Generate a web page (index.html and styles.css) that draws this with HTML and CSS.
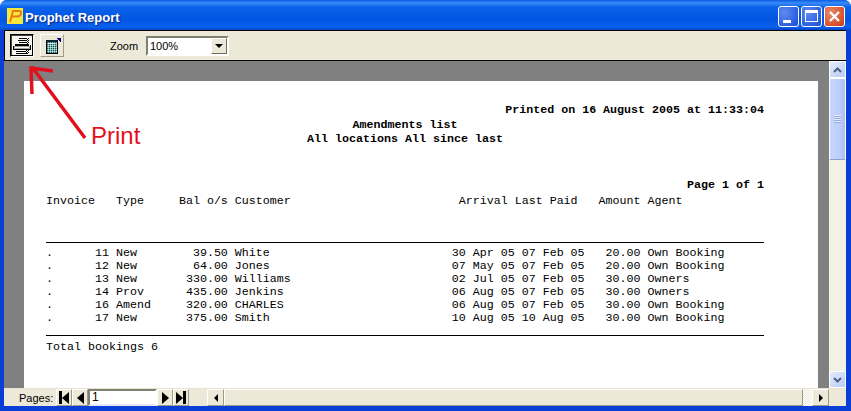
FILE: index.html
```html
<!DOCTYPE html>
<html lang="en">
<head>
<meta charset="utf-8">
<title>Prophet Report</title>
<link rel="stylesheet" href="styles.css">
</head>
<body>
<div class="window">
  <header class="titlebar">
    <svg class="app-icon" viewBox="0 0 16 16" width="16" height="16"><rect width="16" height="16" fill="#f8e838"/><path d="M3 14 L6 3 H12.5 Q14.5 3 14 5.5 Q13.5 8.500 10 8.500 H5" fill="none" stroke="#e8761c" stroke-width="1.800"/></svg>
    <span class="title">Prophet Report</span>
    <div class="caption-buttons">
      <button class="cap cap-blue"><span class="min-glyph"></span></button>
      <button class="cap cap-blue"><span class="max-glyph"></span></button>
      <button class="cap cap-red"><svg viewBox="0 0 13 13" width="13" height="13"><path d="M2 2 L11 11 M11 2 L2 11" stroke="#fff" stroke-width="2.400"/></svg></button>
    </div>
  </header>
  <div class="toolbar">
    <button class="tool tool-pressed">
      <svg viewBox="0 0 18 17" width="18" height="17" shape-rendering="crispEdges"><defs><pattern id="dith" width="2" height="2" patternUnits="userSpaceOnUse"><rect width="2" height="2" fill="#fff"/><rect width="1" height="1" fill="#000"/><rect x="1" y="1" width="1" height="1" fill="#000"/></pattern></defs><path d="M5 0h10v7H5z" fill="#fff"/><path d="M6 1h8M5 3h10M6 5h9" stroke="#000"/><path d="M14 1h2v6h-2z" fill="url(#dith)"/><path d="M2 7h14v2H2z" fill="#000"/><path d="M1 9h16v3H1z" fill="#a8a898"/><path d="M2 10h14" stroke="#fff"/><path d="M0 9h1v4H0zM17 8h1v5h-1zM1 12h16v1H1z" fill="#000"/><path d="M3 13h12v3H3z" fill="#fff"/><path d="M3 14h12M3 16h12" stroke="#000"/><path d="M13 13h3v3h-3z" fill="url(#dith)"/></svg>
    </button>
    <button class="tool">
      <svg viewBox="0 0 18 16" width="18" height="16" shape-rendering="crispEdges"><defs><pattern id="teal" width="2" height="2" patternUnits="userSpaceOnUse"><rect width="2" height="2" fill="#6fb0a8"/><rect width="1" height="1" fill="#1c5a60"/><rect x="1" y="1" width="1" height="1" fill="#d0e4e0"/></pattern></defs><path d="M3 2h11v13H3z" fill="url(#teal)" stroke="#000"/><path d="M3 2h11v2H3z" fill="#123"/><path d="M5 5h7v1H5z" fill="#e8f0f0"/><path d="M14 0h4v5z" fill="#000080"/></svg>
    </button>
    <span class="zoom-label">Zoom</span>
    <div class="combo">
      <span class="combo-value">100%</span>
      <span class="combo-btn"><span class="tri-down"></span></span>
    </div>
  </div>
  <div class="client">
    <main class="viewport">
      <article class="page">
        <p class="report-line bold right">Printed on 16 August 2005 at 11:33:04</p>
        <p class="report-line bold center title-one">Amendments list</p>
        <p class="report-line bold center">All locations All since last</p>
        <p class="report-line bold right page-no">Page 1 of 1</p>
        <pre class="report-head">Invoice   Type     Bal o/s Customer                        Arrival Last Paid   Amount Agent</pre>
        <pre class="report-rows">.      11 New        39.50 White                          30 Apr 05 07 Feb 05   20.00 Own Booking
.      12 New        64.00 Jones                          07 May 05 07 Feb 05   20.00 Own Booking
.      13 New       330.00 Williams                       02 Jul 05 07 Feb 05   30.00 Owners
.      14 Prov      435.00 Jenkins                        06 Aug 05 07 Feb 05   30.00 Owners
.      16 Amend     320.00 CHARLES                        06 Aug 05 07 Feb 05   30.00 Own Booking
.      17 New       375.00 Smith                          10 Aug 05 10 Aug 05   30.00 Own Booking</pre>
        <p class="report-line total">Total bookings 6</p>
      </article>
    </main>
    <aside class="vscroll">
      <span class="vbtn"><svg viewBox="0 0 9 6" width="9" height="6"><path d="M1 5 L4.500 1.500 L8 5" fill="none" stroke="#4d6185" stroke-width="2"/></svg></span>
      <span class="vthumb"><span class="grip"></span></span>
      <span class="vtrack"></span>
      <span class="vbtn"><svg viewBox="0 0 9 6" width="9" height="6"><path d="M1 1 L4.500 4.500 L8 1" fill="none" stroke="#4d6185" stroke-width="2"/></svg></span>
    </aside>
  </div>
  <footer class="statusbar">
    <span class="pages-label">Pages:</span>
    <button class="nav"><span class="bar"></span><span class="tri-left"></span></button>
    <button class="nav"><span class="tri-left"></span></button>
    <div class="page-input">1</div>
    <button class="nav"><span class="tri-right"></span></button>
    <button class="nav"><span class="tri-right"></span><span class="bar"></span></button>
    <div class="hscroll">
      <button class="hbtn"><span class="tri-left small"></span></button>
      <span class="hthumb"></span>
      <span class="htrack"></span>
      <button class="hbtn"><span class="tri-right small"></span></button>
    </div>
  </footer>
  <div class="annotation">
    <svg class="arrow" viewBox="0 0 60 80" width="60" height="80"><path d="M56 74 L3 3 M3 30 L2 4 L24 7" fill="none" stroke="#e2101c" stroke-width="3.500"/></svg>
    <span class="print-label">Print</span>
  </div>
</div>
</body>
</html>
```
FILE: styles.css
```css
* { box-sizing: border-box; }
html, body { margin: 0; padding: 0; }
body { width: 851px; height: 411px; overflow: hidden; background: #fff; }
button { padding: 0; margin: 0; font: inherit; }
p, pre { margin: 0; }

.window {
  position: relative;
  width: 851px;
  height: 411px;
  display: flex;
  flex-direction: column;
  padding: 0 5px 5px 4px;
  background: #0a3fd6;
  border-radius: 7px 7px 0 0;
  font-family: "Liberation Sans", Arial, sans-serif;
  overflow: hidden;
}

.titlebar {
  height: 30px;
  margin: 0 -5px 0 -4px;
  padding: 2px 5px 0 7px;
  display: flex;
  align-items: center;
  background: linear-gradient(180deg, #0a5be4 0, #3a8cf8 3px, #0a62ea 7px, #0355e2 20px, #0a62ee 27px, #0346c8 30px);
}
.app-icon { flex: none; }
.title {
  margin: 2px 0 0 2px;
  color: #fff;
  font-size: 13px;
  font-weight: bold;
  text-shadow: 1px 1px 1px #0a2a90;
}
.caption-buttons { margin-left: auto; display: flex; gap: 2px; margin-right: 1px; }
.cap {
  width: 21px;
  height: 21px;
  border: 1px solid #fff;
  border-radius: 3px;
  display: flex;
  align-items: center;
  justify-content: center;
  position: relative;
}
.cap-blue { background: radial-gradient(circle at 30% 30%, #5f8cf0, #2b5fe0 70%, #1d4cc8); }
.cap-red { background: radial-gradient(circle at 30% 30%, #e88a68, #d8512c 70%, #b83a18); }
.min-glyph { position: absolute; left: 4px; bottom: 3px; width: 8px; height: 3px; background: #fff; }
.max-glyph { width: 13px; height: 12px; border: 1px solid #fff; border-top-width: 3px; }

.toolbar {
  height: 31px;
  flex: none;
  background: #ece9d8;
  border: 1px solid #000;
  border-right: 0;
  border-left-width: 1px;
  display: flex;
  align-items: center;
  padding: 0 0 0 5px;
}
.tool {
  width: 24px;
  height: 23px;
  background: #ece9d8;
  border: 1px solid;
  border-color: #fff #9d9a8a #9d9a8a #fff;
  display: flex;
  align-items: center;
  justify-content: center;
  margin-right: 6px;
}
.tool-pressed { border-color: #000 #fff #fff #000; box-shadow: inset -1px -1px 0 #000, inset 1px 1px 0 #444; background: #f6f5ee; }
.zoom-label { margin-left: 40px; font-size: 11px; color: #000; width: 36px; }
.combo {
  width: 83px;
  height: 20px;
  background: #fff;
  border: 2px solid;
  border-color: #808070 #fff #fff #808070;
  display: flex;
  align-items: stretch;
  font-size: 11px;
}
.combo-value { flex: 1; padding: 1px 0 0 2px; line-height: 14px; }
.combo-btn {
  width: 16px;
  background: #ece9d8;
  border: 1px solid;
  border-color: #fff #716f64 #716f64 #fff;
  display: flex;
  align-items: center;
  justify-content: center;
}
.tri-down { width: 0; height: 0; border: 4px solid transparent; border-top-color: #000; border-bottom-width: 0; }

.client { flex: 1; min-height: 0; display: flex; }
.viewport { flex: 1; min-width: 0; background: #808080; padding: 20px 12px 0 20px; overflow: hidden; }
.page {
  width: 794px;
  height: 308px;
  background: #fff;
  padding: 23px 54px 0 22px;
  font-family: "Liberation Mono", "Courier New", monospace;
  font-size: 11.670px;
  color: #000;
}
.report-line { line-height: 13px; height: 13px; white-space: pre; }
.bold { font-weight: bold; }
.right { text-align: right; }
.center { text-align: center; }
.title-one { margin-top: 2px; margin-bottom: 1px; }
.page-no { margin-top: 33px; }
pre { font: inherit; }
.report-head { line-height: 13px; margin-top: 3px; height: 47px; }
.report-rows {
  line-height: 13px;
  border-top: 1px solid #000;
  border-bottom: 1px solid #000;
  padding: 4px 0 10px;
}
.total { margin-top: 5px; }

.vscroll {
  width: 17px;
  flex: none;
  background: #f3f1e6;
  display: flex;
  flex-direction: column;
}
.vbtn {
  height: 17px;
  flex: none;
  background: linear-gradient(135deg, #e4ecfd, #b8ccf6);
  border: 1px solid #fff;
  border-radius: 2px;
  display: flex;
  align-items: center;
  justify-content: center;
}
.vthumb {
  height: 82px;
  flex: none;
  background: linear-gradient(90deg, #c8d6fb, #bccffa 60%, #aebff0);
  border: 1px solid #fff;
  border-bottom-color: #8e9fcc;
  border-radius: 2px;
  display: flex;
  align-items: center;
  justify-content: center;
}
.grip {
  width: 7px;
  height: 8px;
  background: repeating-linear-gradient(180deg, #e8eefe 0 1px, #93a8dc 1px 2px);
}
.vtrack { flex: 1; }

.statusbar {
  height: 18px;
  flex: none;
  background: #ece9d8;
  display: flex;
  align-items: center;
  border-top: 1px solid #e6e3d2;
}
.pages-label { width: 48px; padding-left: 15px; font-size: 11px; margin-right: 4px; color: #000; }
.nav {
  width: 16px;
  height: 17px;
  background: #ece9d8;
  border: 1px solid;
  border-color: #fff #9d9a8a #9d9a8a #fff;
  display: flex;
  align-items: center;
  justify-content: center;
}
.bar { width: 3px; height: 13px; background: #000; }
.tri-left { width: 0; height: 0; border-style: solid; border-color: transparent #000 transparent transparent; border-width: 6.500px 7px 6.500px 0; }
.tri-right { width: 0; height: 0; border-style: solid; border-color: transparent transparent transparent #000; border-width: 6.500px 0 6.500px 7px; }
.tri-left.small { border-width: 4px 4px 4px 0; }
.tri-right.small { border-width: 4px 0 4px 4px; }
.page-input {
  width: 69px;
  height: 17px;
  background: #fff;
  border: 2px solid;
  border-color: #808070 #fff #e4e8f8 #808070;
  font-size: 12px;
  line-height: 13px;
  padding-left: 2px;
}
.hscroll { margin-left: 18px; flex: 1; height: 17px; display: flex; margin-right: 17px; }
.hbtn {
  width: 17px;
  flex: none;
  background: #ece9d8;
  border: 1px solid;
  border-color: #fff #9d9a8a #9d9a8a #fff;
  display: flex;
  align-items: center;
  justify-content: center;
}
.hthumb { flex: 1; background: #ece9d8; border: 1px solid; border-color: #fff #9d9a8a #9d9a8a #fff; }
.htrack {
  width: 9px;
  background: repeating-conic-gradient(#fff 0 25%, #ece9d8 0 50%) 0 0 / 2px 2px;
}

.annotation { position: absolute; inset: 0; pointer-events: none; }
.arrow { position: absolute; left: 29px; top: 64px; }
.print-label {
  position: absolute;
  left: 91px;
  top: 122px;
  color: #e2101c;
  font-size: 24px;
  line-height: 28px;
}
```
